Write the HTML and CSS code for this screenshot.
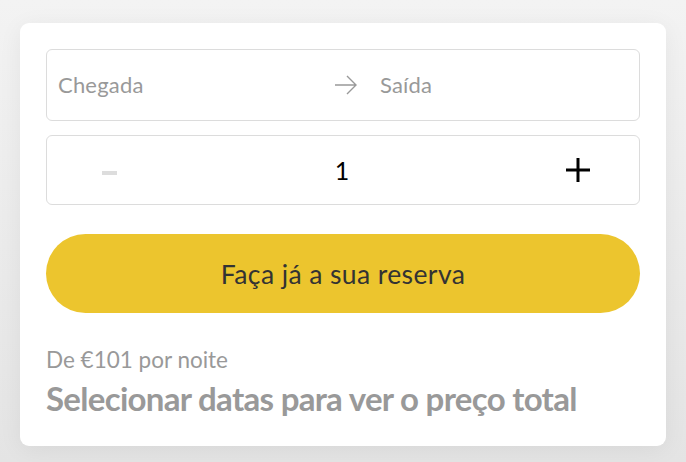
FILE: index.html
```html
<!DOCTYPE html>
<html lang="pt">
<head>
<meta charset="utf-8">
<link rel="stylesheet" href="styles.css">
</head>
<body>
<div class="card">
  <div class="dates">
    <span class="date-label">Chegada</span>
    <svg class="arrow" width="24" height="20" viewBox="0 0 24 20"><path d="M1 10 H22 M13 1 L22 10 L13 19" fill="none" stroke="#999" stroke-width="1.4"/></svg>
    <span class="date-label">Saída</span>
  </div>
  <div class="guests">
    <span class="minus"></span>
    <span class="count">1</span>
    <svg class="plus" width="26" height="26" viewBox="0 0 26 26"><path d="M13 1 V25 M1 13 H25" stroke="#000" stroke-width="3"/></svg>
  </div>
  <button class="book">Faça já a sua reserva</button>
  <div class="price">
    <div class="from">De €101 por noite</div>
    <div class="total">Selecionar datas para ver o preço total</div>
  </div>
</div>
</body>
</html>
```
FILE: styles.css
```css
html, body { margin: 0; padding: 0; }
body {
  width: 686px; height: 462px; overflow: hidden;
  background: linear-gradient(#f3f3f3, #e4e4e4);
  font-family: "Lato", "Liberation Sans", sans-serif;
}
.card {
  margin: 23px 20px 0 20px;
  height: 423px;
  box-sizing: border-box;
  background: #fff;
  border-radius: 9px;
  padding: 26px 26px 0 26px;
  box-shadow: 0 4px 24px rgba(0,0,0,0.06);
}
.dates {
  height: 72px; box-sizing: border-box;
  border: 1px solid #dcdcdc; border-radius: 6px;
  display: flex; align-items: center;
  padding-left: 11px;
}
.date-label { color: #999; font-size: 22px; letter-spacing: 0.2px; line-height: 28px; margin-top: -1px; }
.dates .date-label:first-child { width: 276px; }
.arrow { margin-right: 22px; }
.guests {
  margin-top: 14px;
  height: 70px; box-sizing: border-box;
  border: 1px solid #dcdcdc; border-radius: 6px;
  display: flex; align-items: center; justify-content: space-between;
  padding: 0 48px 0 55px;
}
.minus { width: 15px; height: 4px; background: #ddd; margin-top: 6px; }
.count { font-size: 25px; color: #000; margin-left: 2px; line-height: 30px; }
.book {
  display: block; width: 100%;
  margin-top: 29px; height: 79px;
  border: none; border-radius: 40px;
  background: #ecc52e; color: #333;
  font-family: inherit; font-size: 26.5px; letter-spacing: 0.4px;
  padding: 0;
}
.price { margin-top: 33px; }
.from { color: #999; font-size: 22.5px; letter-spacing: 0; line-height: 28px; }
.total { color: #999; font-size: 33px; font-weight: 700; letter-spacing: -0.7px; line-height: 40px; margin-top: 4px; }
```
